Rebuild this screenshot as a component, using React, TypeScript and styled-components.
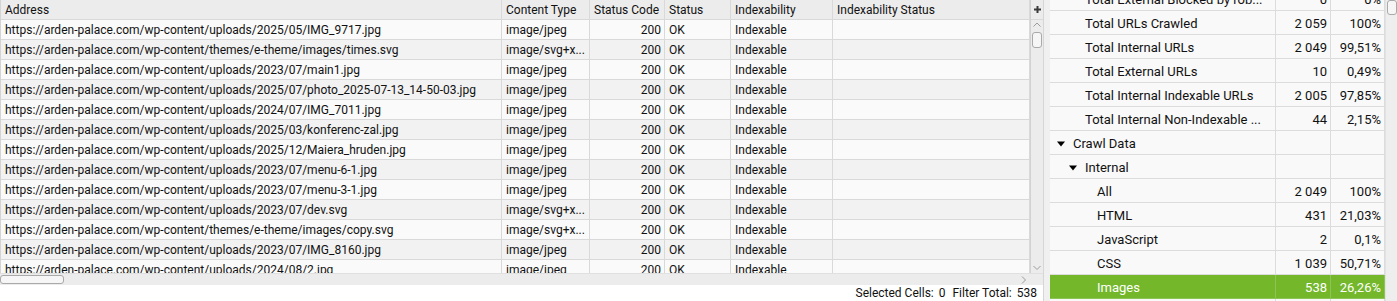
import styled, { createGlobalStyle } from 'styled-components';

const GlobalStyle = createGlobalStyle`
  html, body {
    margin: 0;
    padding: 0;
  }

  body {
    font-family: Roboto, "Liberation Sans", sans-serif;
    background: #f0f0f0;
    color: #111;
  }
`;

const Page = styled.div`
  display: flex;
  width: 1397px;
  height: 301px;
  overflow: hidden;
`;

/* left side: the url table */

const LeftPane = styled.div`
  display: flex;
  flex-direction: column;
  flex: none;
  width: 1043px;
  border-right: 1px solid #d6d6d6;
`;

const TableArea = styled.div`
  display: flex;
  height: 273px;
`;

const Grid = styled.div`
  width: 1030px;
  overflow: hidden;
  border-left: 1px solid #d4d4d4;
  box-sizing: border-box;
  background: #f6f6f6;
`;

const Row = styled.div<{ $head?: boolean; $odd?: boolean }>`
  display: grid;
  grid-template-columns: 501px 88px 75px 66px 102px 197px;
  height: 19px;
  border-bottom: 1px solid #d9d9d9;
  background: ${(p) => (p.$head ? '#ececec' : p.$odd ? '#fafafa' : '#f2f2f2')};
`;

const Cell = styled.div<{ $right?: boolean }>`
  display: flex;
  align-items: center;
  justify-content: ${(p) => (p.$right ? 'flex-end' : 'flex-start')};
  padding: 1px 3px 0 4px;
  box-sizing: border-box;
  border-right: 1px solid #d9d9d9;
  font-size: 12px;
  white-space: nowrap;
  overflow: hidden;
  color: #111;
`;

const VScroll = styled.div`
  display: flex;
  flex-direction: column;
  width: 13px;
  border-left: 1px solid #d2d2d2;
  box-sizing: border-box;
`;

const PlusCell = styled.div`
  display: flex;
  align-items: center;
  justify-content: center;
  height: 19px;
  flex: none;
  background: #ececec;
  border-bottom: 1px solid #d9d9d9;
`;

const Track = styled.div`
  display: flex;
  flex-direction: column;
  align-items: center;
  flex: 1;
  background: #ececec;
`;

const Thumb = styled.div<{ $w: number; $h: number }>`
  width: ${(p) => p.$w}px;
  height: ${(p) => p.$h}px;
  box-sizing: border-box;
  border: 1px solid #a9a9a9;
  border-radius: 3px;
  background: #f6f6f6;
  flex: none;
`;

const Gap = styled.div<{ $h: number }>`
  height: ${(p) => p.$h}px;
  flex: none;
`;

const Spacer = styled.div`
  flex: 1;
`;

const HScroll = styled.div`
  display: flex;
  height: 12px;
  background: #ececec;
  border-top: 1px solid #e0e0e0;
  box-sizing: border-box;
`;

const HTrack = styled.div`
  display: flex;
  align-items: center;
  width: 1030px;
  padding-right: 3px;
  box-sizing: border-box;
`;

const StatusBar = styled.div`
  display: flex;
  align-items: center;
  justify-content: flex-end;
  gap: 7px;
  height: 16px;
  padding-right: 6px;
  background: #ffffff;
  font-size: 12px;
  color: #111;
`;

const StatusItem = styled.span`
  display: flex;
  gap: 5px;
`;

/* right side: the overview tree */

const Splitter = styled.div`
  width: 6px;
  flex: none;
  background: #f0f0f0;
`;

const RightPane = styled.div`
  display: flex;
  flex: 1;
  background: #ffffff;
`;

const TreeView = styled.div`
  width: 335px;
  overflow: hidden;
`;

const TreeBody = styled.div`
  margin-top: -13px;
`;

const TreeRow = styled.div<{ $selected?: boolean }>`
  display: grid;
  grid-template-columns: 226px 55px 54px;
  height: 23px;
  border-bottom: 1px solid ${(p) => (p.$selected ? '#8cc556' : '#dcdcdc')};
  background: ${(p) => (p.$selected ? '#74b72b' : '#f9f9f9')};
  color: ${(p) => (p.$selected ? '#ffffff' : '#111')};
`;

const TreeCell = styled.div<{ $right?: boolean; $pad?: number; $selected?: boolean }>`
  display: flex;
  align-items: center;
  justify-content: ${(p) => (p.$right ? 'flex-end' : 'flex-start')};
  padding: 2px 3px 0 ${(p) => p.$pad ?? 0}px;
  box-sizing: border-box;
  border-right: 1px solid ${(p) => (p.$selected ? '#8cc556' : '#dcdcdc')};
  font-size: 13px;
  white-space: nowrap;
  overflow: hidden;
`;

const Toggle = styled.span`
  display: inline-flex;
  width: 16px;
  flex: none;
`;

const SideScroll = styled.div`
  display: flex;
  flex-direction: column;
  align-items: flex-end;
  flex: 1;
  background: #eeeeee;
  border-left: 1px solid #e2e2e2;
`;

const Chevron = ({ dir }: { dir: 'up' | 'down' | 'right' }) => {
  const pts = dir === 'up' ? '0.5,4.5 4,1 7.5,4.5' : dir === 'down' ? '0.5,1 4,4.5 7.5,1' : '1,0.5 4.5,4 1,7.5';
  const w = dir === 'right' ? 6 : 8;
  const h = dir === 'right' ? 8 : 6;
  return (
    <svg width={w} height={h} viewBox={`0 0 ${w} ${h}`}>
      <polyline points={pts} fill="none" stroke="#9c9c9c" strokeWidth="1" />
    </svg>
  );
};

const Plus = () => (
  <svg width="7" height="7" viewBox="0 0 7 7">
    <rect x="2.5" y="0" width="2" height="7" fill="#3a3a3a" />
    <rect x="0" y="2.5" width="7" height="2" fill="#3a3a3a" />
  </svg>
);

const Triangle = () => (
  <svg width="8" height="6" viewBox="0 0 8 6">
    <polygon points="0,0.5 8,0.5 4,5.5" fill="#000" />
  </svg>
);

const base = 'https://arden-palace.com/wp-content/';

const urls = [
  ['uploads/2025/05/IMG_9717.jpg', 'image/jpeg'],
  ['themes/e-theme/images/times.svg', 'image/svg+x...'],
  ['uploads/2023/07/main1.jpg', 'image/jpeg'],
  ['uploads/2025/07/photo_2025-07-13_14-50-03.jpg', 'image/jpeg'],
  ['uploads/2024/07/IMG_7011.jpg', 'image/jpeg'],
  ['uploads/2025/03/konferenc-zal.jpg', 'image/jpeg'],
  ['uploads/2025/12/Maiera_hruden.jpg', 'image/jpeg'],
  ['uploads/2023/07/menu-6-1.jpg', 'image/jpeg'],
  ['uploads/2023/07/menu-3-1.jpg', 'image/jpeg'],
  ['uploads/2023/07/dev.svg', 'image/svg+x...'],
  ['themes/e-theme/images/copy.svg', 'image/svg+x...'],
  ['uploads/2023/07/IMG_8160.jpg', 'image/jpeg'],
  ['uploads/2024/08/2.jpg', 'image/jpeg'],
];

type Node = {
  label: string;
  level: number;
  open?: boolean;
  count?: string;
  pct?: string;
  selected?: boolean;
};

const tree: Node[] = [
  { label: 'Total External Blocked by rob...', level: 1, count: '0', pct: '0%' },
  { label: 'Total URLs Crawled', level: 1, count: '2 059', pct: '100%' },
  { label: 'Total Internal URLs', level: 1, count: '2 049', pct: '99,51%' },
  { label: 'Total External URLs', level: 1, count: '10', pct: '0,49%' },
  { label: 'Total Internal Indexable URLs', level: 1, count: '2 005', pct: '97,85%' },
  { label: 'Total Internal Non-Indexable ...', level: 1, count: '44', pct: '2,15%' },
  { label: 'Crawl Data', level: 0, open: true },
  { label: 'Internal', level: 1, open: true },
  { label: 'All', level: 2, count: '2 049', pct: '100%' },
  { label: 'HTML', level: 2, count: '431', pct: '21,03%' },
  { label: 'JavaScript', level: 2, count: '2', pct: '0,1%' },
  { label: 'CSS', level: 2, count: '1 039', pct: '50,71%' },
  { label: 'Images', level: 2, count: '538', pct: '26,26%', selected: true },
  { label: 'PDF', level: 2, count: '0', pct: '0%' },
];

const App = () => {
  return (
    <>
      <GlobalStyle />
      <Page>
        <LeftPane>
          <TableArea>
            <Grid>
              <Row $head>
                <Cell>Address</Cell>
                <Cell>Content Type</Cell>
                <Cell>Status Code</Cell>
                <Cell>Status</Cell>
                <Cell>Indexability</Cell>
                <Cell>Indexability Status</Cell>
              </Row>
              {urls.map(([path, type], i) => (
                <Row key={path} $odd={i % 2 === 0}>
                  <Cell>{base + path}</Cell>
                  <Cell>{type}</Cell>
                  <Cell $right>200</Cell>
                  <Cell>OK</Cell>
                  <Cell>Indexable</Cell>
                  <Cell />
                </Row>
              ))}
            </Grid>
            <VScroll>
              <PlusCell>
                <Plus />
              </PlusCell>
              <Track>
                <Gap $h={2} />
                <Chevron dir="up" />
                <Gap $h={4} />
                <Thumb $w={10} $h={16} />
                <Spacer />
                <Chevron dir="down" />
                <Gap $h={2} />
              </Track>
            </VScroll>
          </TableArea>
          <HScroll>
            <HTrack>
              <Thumb $w={64} $h={9} />
              <Spacer />
              <Chevron dir="right" />
            </HTrack>
          </HScroll>
          <StatusBar>
            <StatusItem>
              <span>Selected Cells:</span>
              <span>0</span>
            </StatusItem>
            <StatusItem>
              <span>Filter Total:</span>
              <span>538</span>
            </StatusItem>
          </StatusBar>
        </LeftPane>
        <Splitter />
        <RightPane>
          <TreeView>
            <TreeBody>
              {tree.map((n) => {
                const leaf = n.open === undefined;
                const pad = 7 + 12 * n.level + (leaf ? 16 : 0);
                return (
                  <TreeRow key={n.label} $selected={n.selected}>
                    <TreeCell $pad={pad} $selected={n.selected}>
                      {!leaf && (
                        <Toggle>
                          <Triangle />
                        </Toggle>
                      )}
                      {n.label}
                    </TreeCell>
                    <TreeCell $right $selected={n.selected}>
                      {n.count}
                    </TreeCell>
                    <TreeCell $right $selected={n.selected}>
                      {n.pct}
                    </TreeCell>
                  </TreeRow>
                );
              })}
            </TreeBody>
          </TreeView>
          <SideScroll>
            <Thumb $w={10} $h={15} />
          </SideScroll>
        </RightPane>
      </Page>
    </>
  );
};

export default App;
